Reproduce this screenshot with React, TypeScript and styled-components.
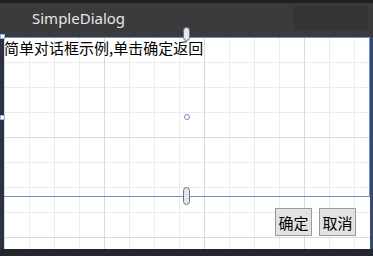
import React from "react";
import styled, { createGlobalStyle } from "styled-components";

const Global = createGlobalStyle`
  html, body { margin: 0; padding: 0; background: #1c1c1e; }
  body { width: 373px; height: 256px; overflow: hidden; }
`;

const Window = styled.div`
  width: 373px;
  height: 256px;
  display: flex;
  flex-direction: column;
  background: #1f1f22;
  font-family: "Noto Sans", "Noto Sans CJK SC", sans-serif;
`;

const TitleBar = styled.div`
  height: 34px;
  margin-top: 3px;
  display: flex;
  align-items: center;
  padding: 0 5px 0 32px;
  background: #3b3a3d;
  color: #e6e6e6;
  font-size: 15px;
  position: relative;
`;

const Title = styled.span`
  flex: 1;
  margin-top: -4px;
`;

const CaptionArea = styled.div`
  width: 74px;
  height: 24px;
  margin-top: -4px;
  background: #343336;
`;

const Body = styled.div`
  flex: 1;
  display: flex;
  padding-bottom: 7px;
  background: #24272e;
`;

const Edge = styled.div<{ $w: number; $c: string }>`
  width: ${(p) => p.$w}px;
  background: ${(p) => p.$c};
  flex-shrink: 0;
`;

const Canvas = styled.div`
  flex: 1;
  position: relative;
  display: flex;
  flex-direction: column;
  background-color: #ffffff;
  background-image:
    linear-gradient(to right, #d9d9d9 1px, transparent 1px),
    linear-gradient(to bottom, #d9d9d9 1px, transparent 1px),
    linear-gradient(to right, #ececec 1px, transparent 1px),
    linear-gradient(to bottom, #ececec 1px, transparent 1px);
  background-size: 100px 100px, 100px 100px, 25px 25px, 25px 25px;
  background-position: 0 0, 0 0, 0 0, 0 0;
`;

const Selection = styled.div`
  height: 160px;
  box-sizing: border-box;
  border: 1px solid #6f8fc6;
  border-left: none;
  position: relative;
`;

const Message = styled.div`
  font-family: "Noto Sans CJK SC", sans-serif;
  font-size: 15px;
  line-height: 18px;
  color: #000;
  padding: 1px 0 0 0;
`;

const Capsule = styled.div<{ $top: number; $h: number }>`
  position: absolute;
  left: 179px;
  top: ${(p) => p.$top}px;
  width: 5px;
  height: ${(p) => p.$h}px;
  border: 1px solid #6a7490;
  border-radius: 4px;
  background: #e4e6ec;
`;

const Dot = styled.div`
  position: absolute;
  left: 180px;
  top: 76px;
  width: 4px;
  height: 4px;
  border: 1px solid #6f8fc6;
  border-radius: 50%;
  background: #fff;
`;

const SideHandle = styled.div<{ $top: number }>`
  position: absolute;
  left: -4px;
  top: ${(p) => p.$top}px;
  width: 3px;
  height: 3px;
  border: 1px solid #8fb0e0;
  background: #fff;
`;

const Footer = styled.div`
  margin-top: auto;
  display: flex;
  justify-content: flex-end;
  gap: 7px;
  padding: 0 14px 13px 0;
`;

const Button = styled.button`
  width: 37px;
  height: 28px;
  padding: 0;
  box-sizing: border-box;
  border: 1px solid #9a9a9a;
  background: #e2e2e2;
  font-family: "Noto Sans CJK SC", sans-serif;
  font-size: 15px;
  color: #000;
`;

export default function App() {
  return (
    <Window>
      <Global />
      <TitleBar>
        <Title>SimpleDialog</Title>
        <CaptionArea />
      </TitleBar>
      <Body>
        <Edge $w={4} $c="#2a3140" />
        <Canvas>
          <Selection>
            <Message>简单对话框示例,单击确定返回</Message>
            <Dot />
            <SideHandle $top={-4} />
            <SideHandle $top={77} />
          </Selection>
          <Capsule $top={-10} $h={12} />
          <Capsule $top={150} $h={16} />
          <Footer>
            <Button>确定</Button>
            <Button>取消</Button>
          </Footer>
        </Canvas>
        <Edge $w={3} $c="#3a4a6c" />
      </Body>
    </Window>
  );
}
